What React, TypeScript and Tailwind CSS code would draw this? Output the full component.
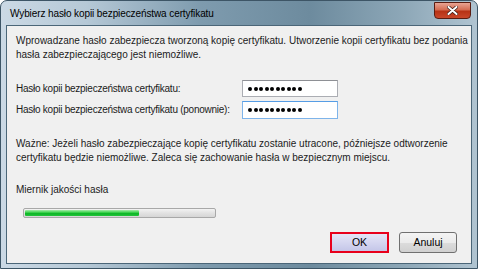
import React from 'react';

const font = { fontFamily: '"Liberation Sans", Arial, sans-serif' };

function Dots() {
  return (
    <div className="flex items-center gap-[1.5px] pl-[5px]">
      {Array.from({ length: 10 }).map((_, i) => (
        <span key={i} className="w-[4px] h-[4px] rounded-full bg-black" />
      ))}
    </div>
  );
}

export default function App() {
  return (
    <div
      className="w-[478px] h-[269px] flex flex-col rounded-t-[7px] border border-[#3d5566] bg-[linear-gradient(90deg,#cbd9e5_0%,#b5c8d6_18%,#7e9bae_42%,#6d8b9e_65%,#8ea8b8_85%,#b0c4d1_100%)] overflow-hidden text-[#1b1b1b]"
      style={font}
    >
      {/* title bar */}
      <div className="h-[24px] flex justify-between items-start shrink-0">
        <div className="pl-[9px] pt-[6px] text-[10px] leading-[14px] tracking-[-0.1px] text-black whitespace-nowrap">
          Wybierz hasło kopii bezpieczeństwa certyfikatu
        </div>
        <div className="mr-[6px] mt-[1px] w-[37px] h-[17px] rounded-b-[4px] border border-[#5a1d12] bg-[linear-gradient(180deg,#e8a493_0%,#d46c52_45%,#b73215_55%,#c8472a_100%)] flex items-center justify-center">
          <svg width="11" height="9" viewBox="0 0 11 9">
            <path d="M1.5 1 L9.5 8 M9.5 1 L1.5 8" stroke="#3a1a14" strokeWidth="3.4" strokeLinecap="round" />
            <path d="M1.5 1 L9.5 8 M9.5 1 L1.5 8" stroke="#ffffff" strokeWidth="2" strokeLinecap="round" />
          </svg>
        </div>
      </div>

      {/* content */}
      <div className="flex-1 mx-[5px] mb-[4px] border border-[#4b6678] bg-[#f0f0f0] flex flex-col pt-[8px] pl-[9px] pr-[10px] text-[10px] leading-[14px] whitespace-nowrap">
        <p>
          Wprowadzane hasło zabezpiecza tworzoną kopię certyfikatu. Utworzenie kopii certyfikatu bez podania
          <br />
          hasła zabezpieczającego jest niemożliwe.
        </p>

        <div className="mt-[18px] flex flex-col gap-[4px]">
          <div className="flex items-center">
            <span className="w-[226px] tracking-[-0.25px]">Hasło kopii bezpieczeństwa certyfikatu:</span>
            <div className="w-[96px] h-[17px] border border-[#abadb3] border-t-[#8e9095] bg-white flex items-center">
              <Dots />
            </div>
          </div>
          <div className="flex items-center">
            <span className="w-[226px] tracking-[-0.25px]">Hasło kopii bezpieczeństwa certyfikatu (ponownie):</span>
            <div className="w-[96px] h-[18px] border border-[#7eb4ea] border-t-[#569de5] bg-white flex items-center">
              <Dots />
            </div>
          </div>
        </div>

        <p className="mt-[18px]">
          Ważne: Jeżeli hasło zabezpieczające kopię certyfikatu zostanie utracone, późniejsze odtworzenie
          <br />
          certyfikatu będzie niemożliwe. Zaleca się zachowanie hasła w bezpiecznym miejscu.
        </p>

        <p className="mt-[18px]">Miernik jakości hasła</p>

        <div className="mt-[11px] ml-[7px] w-[193px] h-[10px] rounded-[2px] border border-[#a8a8a8] bg-[linear-gradient(180deg,#f3f3f3_0%,#e2e2e2_50%,#d6d6d6_100%)] p-[1px]">
          <div className="h-full w-[114px] rounded-[1px] bg-[linear-gradient(180deg,#a6ecaa_0%,#3fd34f_40%,#0cb526_60%,#24c43a_100%)]" />
        </div>

        <div className="mt-[14px] pr-[4px] flex justify-end gap-[10px]">
          <button className="w-[59px] h-[21px] border-2 border-[#e8001c] bg-[linear-gradient(180deg,#e4e5f7_0%,#d5d6f0_50%,#c4c6e8_100%)] text-[10.5px] leading-none text-black">
            OK
          </button>
          <button className="w-[58px] h-[21px] rounded-[3px] border border-[#707070] bg-[linear-gradient(180deg,#f4f4f4_0%,#ebebeb_50%,#dcdcdc_51%,#d0d0d0_100%)] text-[10.5px] leading-none text-black">
            Anuluj
          </button>
        </div>
      </div>
    </div>
  );
}
